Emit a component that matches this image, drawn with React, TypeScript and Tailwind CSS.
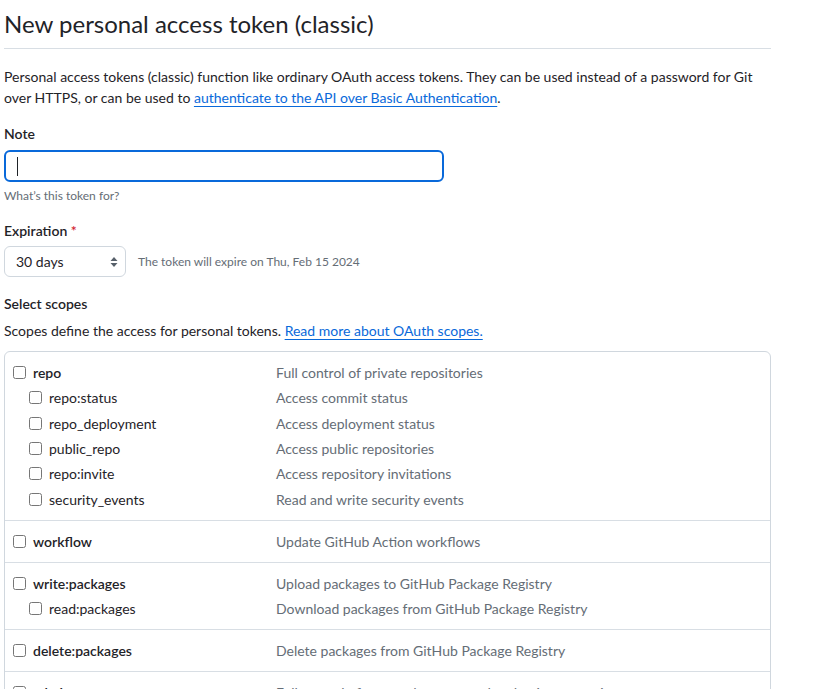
type Scope = {
  name: string;
  desc: string;
  children?: { name: string; desc: string }[];
};

const scopes: Scope[] = [
  {
    name: "repo",
    desc: "Full control of private repositories",
    children: [
      { name: "repo:status", desc: "Access commit status" },
      { name: "repo_deployment", desc: "Access deployment status" },
      { name: "public_repo", desc: "Access public repositories" },
      { name: "repo:invite", desc: "Access repository invitations" },
      { name: "security_events", desc: "Read and write security events" },
    ],
  },
  { name: "workflow", desc: "Update GitHub Action workflows" },
  {
    name: "write:packages",
    desc: "Upload packages to GitHub Package Registry",
    children: [
      { name: "read:packages", desc: "Download packages from GitHub Package Registry" },
    ],
  },
  { name: "delete:packages", desc: "Delete packages from GitHub Package Registry" },
  {
    name: "admin:org",
    desc: "Full control of orgs and teams, read and write org projects",
    children: [
      { name: "write:org", desc: "Read and write org and team membership, read and write org projects" },
      { name: "read:org", desc: "Read org and team membership, read org projects" },
    ],
  },
];

function Box() {
  return (
    <input
      type="checkbox"
      className="m-0 h-[13px] w-[13px] shrink-0 cursor-pointer"
    />
  );
}

function ScopeGroup({ scope }: { scope: Scope }) {
  return (
    <div className="border-t border-[#d8dee4] py-2 first:border-t-0">
      <div className="flex h-[25px] items-center">
        <label className="flex w-[271px] items-center gap-[7px] pl-[8px] font-semibold text-[#1f2328]">
          <Box />
          {scope.name}
        </label>
        <span className="text-[#656d76]">{scope.desc}</span>
      </div>
      {scope.children?.map((c) => (
        <div key={c.name} className="flex h-[25.4px] items-center">
          <label className="flex w-[271px] items-center gap-[7px] pl-[24px] text-[#1f2328]">
            <Box />
            {c.name}
          </label>
          <span className="text-[#656d76]">{c.desc}</span>
        </div>
      ))}
    </div>
  );
}

export default function App() {
  return (
    <div
      className="h-[689px] overflow-hidden bg-white text-[14px] leading-[21px] text-[#1f2328]"
      style={{ fontFamily: 'Lato, "Noto Sans", sans-serif' }}
    >
      <div className="w-[767px] pl-1 box-content">
        <div className="border-b border-[#d8dee4] pt-[7px] pb-[8px]">
          <h1 className="text-[24px] leading-[33px] font-normal">
            New personal access token (classic)
          </h1>
        </div>

        <p className="mt-[17px]">
          Personal access tokens (classic) function like ordinary OAuth access tokens. They can be used instead of a password for Git over HTTPS, or can be used to{" "}
          <a href="#" className="text-[#0969da] underline underline-offset-[3px]">
            authenticate to the API over Basic Authentication
          </a>
          .
        </p>

        <div className="mt-[15px]">
          <div className="font-semibold">Note</div>
          <div className="mt-[6px] flex h-[32px] w-[440px] items-center rounded-[6px] border-2 border-[#0969da] px-[11px]">
            <span className="h-[19px] w-px bg-[#1f2328]" />
          </div>
          <div className="mt-[5px] text-[12px] leading-[18px] text-[#656d76]">
            What’s this token for?
          </div>
        </div>

        <div className="mt-[15px]">
          <div className="font-semibold">
            Expiration <span className="text-[#d1242f]">*</span>
          </div>
          <div className="mt-[5px] flex items-center gap-3">
            <div className="flex h-[31px] w-[122px] items-center justify-between rounded-[6px] border border-[#d0d7de] bg-white pr-[7px] pl-[11px]">
              <span>30 days</span>
              <svg width="8" height="12" viewBox="0 0 8 12" fill="#57606a">
                <path d="M4 1 L7.5 5 H0.5 Z" />
                <path d="M4 11 L7.5 7 H0.5 Z" />
              </svg>
            </div>
            <span className="text-[12px] text-[#656d76]">
              The token will expire on Thu, Feb 15 2024
            </span>
          </div>
        </div>

        <div className="mt-[16px] font-semibold">Select scopes</div>
        <p className="mt-[6px]">
          Scopes define the access for personal tokens.{" "}
          <a href="#" className="text-[#0969da] underline underline-offset-[3px]">
            Read more about OAuth scopes.
          </a>
        </p>

        <div className="mt-[10px] rounded-[6px] border border-[#d0d7de]">
          {scopes.map((s) => (
            <ScopeGroup key={s.name} scope={s} />
          ))}
        </div>
      </div>
    </div>
  );
}
